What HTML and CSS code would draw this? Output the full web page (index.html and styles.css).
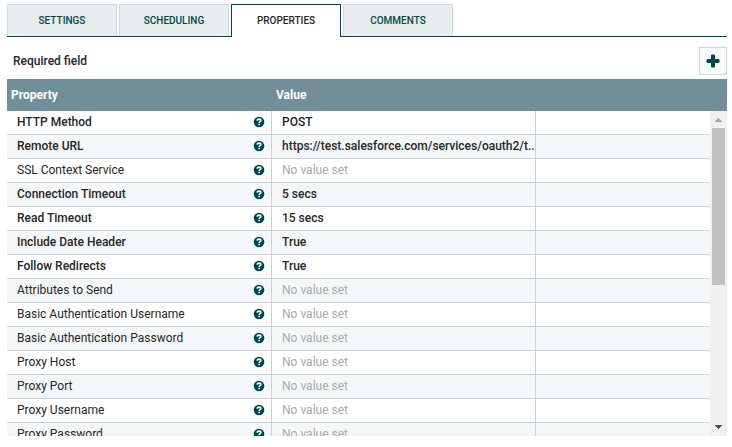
FILE: index.html
```html
<!DOCTYPE html>
<html lang="en">
<head>
<meta charset="utf-8">
<title>Configure Processor</title>
<link rel="stylesheet" href="styles.css">
</head>
<body>
<svg class="defs" aria-hidden="true">
  <symbol id="help" viewBox="0 0 12 12">
    <circle cx="6" cy="6" r="5.300" fill="#004849"/>
    <path d="M4.100 4.700C4.300 3.500 5.100 3.200 6 3.200c1.100 0 1.800.6 1.800 1.400C7.800 5.700 6.200 5.600 6.200 6.900" fill="none" stroke="#fff" stroke-width="1.700"/>
    <path d="M5.300 7.700h1.700v1.600H5.300z" fill="#fff"/>
  </symbol>
</svg>
<main class="dialog">
  <div class="tabs" role="tablist">
    <button class="tab" role="tab">SETTINGS</button>
    <button class="tab" role="tab">SCHEDULING</button>
    <button class="tab active" role="tab" aria-selected="true">PROPERTIES</button>
    <button class="tab" role="tab">COMMENTS</button>
  </div>
  <div class="toolbar">
    <span class="legend">Required field</span>
    <button class="add" aria-label="Add property">
      <svg viewBox="0 0 14 14" width="14" height="14"><path d="M5 1.500Q5 .5 6 .5h2q1 0 1 1V5h3.500q1 0 1 1v2q0 1-1 1H9v3.500q0 1-1 1H6q-1 0-1-1V9H1.500q-1 0-1-1V6q0-1 1-1H5z" fill="#004849"/></svg>
    </button>
  </div>
  <div class="grid">
    <table>
      <colgroup><col class="c-name"><col class="c-value"><col></colgroup>
      <thead><tr><th>Property</th><th>Value</th><th></th></tr></thead>
      <tbody>
        <tr class="required"><td><div class="name">HTTP Method<svg class="help"><use href="#help"/></svg></div></td><td>POST</td><td></td></tr>
        <tr class="required"><td><div class="name">Remote URL<svg class="help"><use href="#help"/></svg></div></td><td>https://test.salesforce.com/services/oauth2/t...</td><td></td></tr>
        <tr><td><div class="name">SSL Context Service<svg class="help"><use href="#help"/></svg></div></td><td class="unset">No value set</td><td></td></tr>
        <tr class="required"><td><div class="name">Connection Timeout<svg class="help"><use href="#help"/></svg></div></td><td>5 secs</td><td></td></tr>
        <tr class="required"><td><div class="name">Read Timeout<svg class="help"><use href="#help"/></svg></div></td><td>15 secs</td><td></td></tr>
        <tr class="required"><td><div class="name">Include Date Header<svg class="help"><use href="#help"/></svg></div></td><td>True</td><td></td></tr>
        <tr class="required"><td><div class="name">Follow Redirects<svg class="help"><use href="#help"/></svg></div></td><td>True</td><td></td></tr>
        <tr><td><div class="name">Attributes to Send<svg class="help"><use href="#help"/></svg></div></td><td class="unset">No value set</td><td></td></tr>
        <tr><td><div class="name">Basic Authentication Username<svg class="help"><use href="#help"/></svg></div></td><td class="unset">No value set</td><td></td></tr>
        <tr><td><div class="name">Basic Authentication Password<svg class="help"><use href="#help"/></svg></div></td><td class="unset">No value set</td><td></td></tr>
        <tr><td><div class="name">Proxy Host<svg class="help"><use href="#help"/></svg></div></td><td class="unset">No value set</td><td></td></tr>
        <tr><td><div class="name">Proxy Port<svg class="help"><use href="#help"/></svg></div></td><td class="unset">No value set</td><td></td></tr>
        <tr><td><div class="name">Proxy Username<svg class="help"><use href="#help"/></svg></div></td><td class="unset">No value set</td><td></td></tr>
        <tr><td><div class="name">Proxy Password<svg class="help"><use href="#help"/></svg></div></td><td class="unset">No value set</td><td></td></tr>
      </tbody>
    </table>
    <div class="scrollbar" aria-hidden="true">
      <svg class="arrow" viewBox="0 0 17 17"><path d="M8 7h1v1h1v1h1v1h1v1H5v-1h1V9h1V8h1z" fill="#a3a3a3"/></svg>
      <div class="track"><div class="thumb"></div></div>
      <svg class="arrow" viewBox="0 0 17 17"><path d="M5 6h7v1h-1v1h-1v1H9v1H8V9H7V8H6V7H5z" fill="#505050"/></svg>
    </div>
  </div>
</main>
</body>
</html>
```

FILE: styles.css
```css
* { box-sizing: border-box; }

body {
  margin: 0;
  background: #fff;
  color: #262626;
  font: 12px/16px Roboto, "Liberation Sans", sans-serif;
}

button { font: inherit; padding: 0; }

.defs { display: none; }

.dialog {
  display: flex;
  flex-direction: column;
  height: 100vh;
  padding: 4px 5px 11px 7px;
}

.tabs {
  display: flex;
  flex: none;
  gap: 2px;
  height: 33px;
  border-bottom: 1px solid #004849;
}

.tab {
  width: 110px;
  height: 32px;
  border: 1px solid #ccdadb;
  border-bottom: 0;
  background: #e9edf0;
  color: #004849;
  font-size: 10px;
  font-weight: 500;
}

.tab.active {
  height: 33px;
  border-color: #004849;
  background: #fff;
  color: #262626;
}

.toolbar {
  display: flex;
  flex: none;
  align-items: center;
  justify-content: space-between;
  height: 42px;
  padding: 6px 0 0 6px;
}

.legend { font-weight: 500; }

.add {
  display: flex;
  align-items: center;
  justify-content: center;
  width: 28px;
  height: 28px;
  border: 1px solid #ccdadb;
  background: #f9fafb;
}

.grid {
  position: relative;
  flex: 1;
  min-height: 0;
  overflow: hidden;
}

table {
  width: 100%;
  table-layout: fixed;
  border-collapse: separate;
  border-spacing: 0;
}

.c-name { width: 265px; }
.c-value { width: 264px; }

th {
  height: 32px;
  padding: 0 4px;
  background: #728e9b;
  color: #fff;
  font-weight: 700;
  text-align: left;
}

td {
  height: 24px;
  padding: 0 0 2px 10px;
  border-right: 1px solid #c7d2d7;
  border-bottom: 1px solid #c7d2d7;
  overflow: hidden;
  white-space: nowrap;
}

tbody tr:nth-child(even) { background: #f4f6f7; }
.required { font-weight: 500; }
.unset { color: #aaa; }

.name {
  display: flex;
  align-items: center;
  justify-content: space-between;
  padding-right: 6px;
}

.help { width: 12px; height: 12px; }

.scrollbar {
  position: absolute;
  top: 32px;
  right: 0;
  bottom: 0;
  display: flex;
  flex-direction: column;
  width: 17px;
  background: #f0f0f0;
}

.arrow { width: 17px; height: 17px; }

.track {
  flex: 1;
  padding: 0 2px;
}

.thumb {
  height: 54%;
  background: #c1c1c1;
}
```
